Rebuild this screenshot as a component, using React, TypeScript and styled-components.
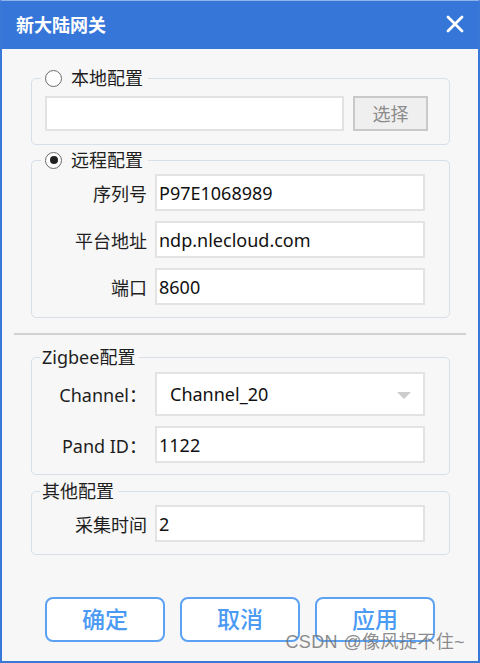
import React from 'react';
import styled, { createGlobalStyle } from 'styled-components';

const GlobalStyle = createGlobalStyle`
  html, body {
    margin: 0;
    padding: 0;
    background: #ffffff;
  }
  * {
    box-sizing: border-box;
  }
`;

type Row = { label: string; value: string };

const remoteRows: Row[] = [
  { label: '序列号', value: 'P97E1068989' },
  { label: '平台地址', value: 'ndp.nlecloud.com' },
  { label: '端口', value: '8600' },
];

const CloseIcon = () => (
  <svg width="18" height="18" viewBox="0 0 18 18">
    <path
      d="M2 2 L16 16 M16 2 L2 16"
      stroke="#ffffff"
      strokeWidth="2.8"
      strokeLinecap="round"
    />
  </svg>
);

const App: React.FC = () => {
  return (
    <>
      <GlobalStyle />
      <Window>
        <TitleBar>
          <Title>新大陆网关</Title>
          <CloseButton>
            <CloseIcon />
          </CloseButton>
        </TitleBar>
        <Body>
          <Group top={29} padTop={17} padBottom={13}>
            <Legend>
              <Radio />
              <span>本地配置</span>
            </Legend>
            <FileRow>
              <FileInput />
              <PickButton type="button">选择</PickButton>
            </FileRow>
          </Group>

          <Group top={15} padTop={13} padBottom={12}>
            <Legend>
              <Radio checked />
              <span>远程配置</span>
            </Legend>
            <Rows>
              {remoteRows.map((row) => (
                <FieldRow key={row.label}>
                  <Label>{row.label}</Label>
                  <TextBox>{row.value}</TextBox>
                </FieldRow>
              ))}
            </Rows>
          </Group>

          <Divider />

          <Group top={22} padTop={14} padBottom={11}>
            <Legend plain>Zigbee配置</Legend>
            <Rows>
              <FieldRow>
                <Label>Channel：</Label>
                <Combo>
                  <span>Channel_20</span>
                  <Arrow />
                </Combo>
              </FieldRow>
              <FieldRow>
                <Label>Pand ID：</Label>
                <TextBox>1122</TextBox>
              </FieldRow>
            </Rows>
          </Group>

          <Group top={16} padTop={13} padBottom={12}>
            <Legend plain>其他配置</Legend>
            <FieldRow>
              <Label>采集时间</Label>
              <TextBox>2</TextBox>
            </FieldRow>
          </Group>

          <ButtonBar>
            <ActionButton type="button">确定</ActionButton>
            <ActionButton type="button">取消</ActionButton>
            <ActionButton type="button">应用</ActionButton>
          </ButtonBar>
        </Body>
        <Watermark>CSDN @像风捉不住~</Watermark>
      </Window>
    </>
  );
};

const fontStack = `"Noto Sans", "Noto Sans CJK SC", sans-serif`;

const Window = styled.div`
  position: relative;
  width: 480px;
  height: 663px;
  display: flex;
  flex-direction: column;
  border: 2px solid #3a78d8;
  border-top: 1px solid #8fb4ec;
  background: #f7f7f7;
  font-family: ${fontStack};
  overflow: hidden;
`;

const TitleBar = styled.div`
  height: 48px;
  flex: none;
  background: #3676d9;
  display: flex;
  align-items: center;
  justify-content: space-between;
  padding: 0 14px 0 14px;
`;

const Title = styled.div`
  color: #ffffff;
  font-size: 18px;
  font-weight: 700;
  margin-top: -2px;
`;

const CloseButton = styled.div`
  display: flex;
  align-items: center;
  margin-top: -2px;
`;

const Body = styled.div`
  flex: 1;
  display: flex;
  flex-direction: column;
`;

const Group = styled.div<{ top: number; padTop: number; padBottom: number }>`
  position: relative;
  margin: ${(p) => p.top}px 28px 0 29px;
  padding: ${(p) => p.padTop}px 20px ${(p) => p.padBottom}px 13px;
  border: 1px solid #d7dfe8;
  border-radius: 5px;
`;

const Legend = styled.div<{ plain?: boolean }>`
  position: absolute;
  top: -13px;
  left: ${(p) => (p.plain ? '8px' : '9px')};
  height: 24px;
  padding: 0 ${(p) => (p.plain ? '4px' : '5px')} 0 ${(p) => (p.plain ? '2px' : '4px')};
  display: flex;
  align-items: center;
  gap: 9px;
  background: #f7f7f7;
  color: #1e1e1e;
  font-size: 18px;
  line-height: 24px;
`;

const Radio = styled.span<{ checked?: boolean }>`
  width: 17px;
  height: 17px;
  border-radius: 50%;
  border: 1.5px solid #6b6b6b;
  background: #ffffff;
  display: inline-flex;
  align-items: center;
  justify-content: center;
  &::after {
    content: '';
    width: 8px;
    height: 8px;
    border-radius: 50%;
    background: ${(p) => (p.checked ? '#222222' : 'transparent')};
  }
`;

const FileRow = styled.div`
  display: flex;
  gap: 9px;
`;

const FileInput = styled.div`
  width: 299px;
  height: 35px;
  background: #ffffff;
  border: 2px solid #e2e2e2;
`;

const PickButton = styled.button`
  width: 75px;
  height: 35px;
  background: #efefef;
  border: 2px solid #c9c9c9;
  color: #8c8c8c;
  font-family: ${fontStack};
  font-size: 18px;
  padding: 0;
  line-height: 1;
`;

const Rows = styled.div`
  display: flex;
  flex-direction: column;
  gap: 10px;
`;

const FieldRow = styled.div`
  display: grid;
  grid-template-columns: 102px 270px;
  column-gap: 8px;
  align-items: center;
`;

const Label = styled.div`
  text-align: right;
  color: #1e1e1e;
  font-size: 18px;
  white-space: nowrap;
`;

const TextBox = styled.div`
  height: 37px;
  background: #ffffff;
  border: 2px solid #e3e3e3;
  padding: 0 2px;
  display: flex;
  align-items: center;
  color: #111111;
  font-size: 18px;
`;

const Combo = styled(TextBox)`
  height: 44px;
  padding: 0 12px 0 13px;
  justify-content: space-between;
`;

const Arrow = styled.span`
  width: 0;
  height: 0;
  border-left: 7px solid transparent;
  border-right: 7px solid transparent;
  border-top: 7px solid #cccccc;
  margin-top: 2px;
`;

const Divider = styled.div`
  height: 2px;
  margin: 15px 12px 0 12px;
  background: #d2d2d2;
`;

const ButtonBar = styled.div`
  display: flex;
  gap: 15px;
  margin: 42px 0 0 43px;
`;

const ActionButton = styled.button`
  width: 120px;
  height: 45px;
  border: 2px solid #5ba2f4;
  border-radius: 8px;
  background: #ffffff;
  color: #4b9af4;
  font-family: ${fontStack};
  font-size: 23px;
  font-weight: 500;
  padding: 0;
  line-height: 1;
`;

const Watermark = styled.div`
  position: absolute;
  right: 13px;
  bottom: 8px;
  color: rgba(110, 110, 110, 0.8);
  font-family: "Liberation Sans", "Noto Sans CJK SC", sans-serif;
  font-size: 18px;
  letter-spacing: 0.4px;
  white-space: nowrap;
`;

export default App;
